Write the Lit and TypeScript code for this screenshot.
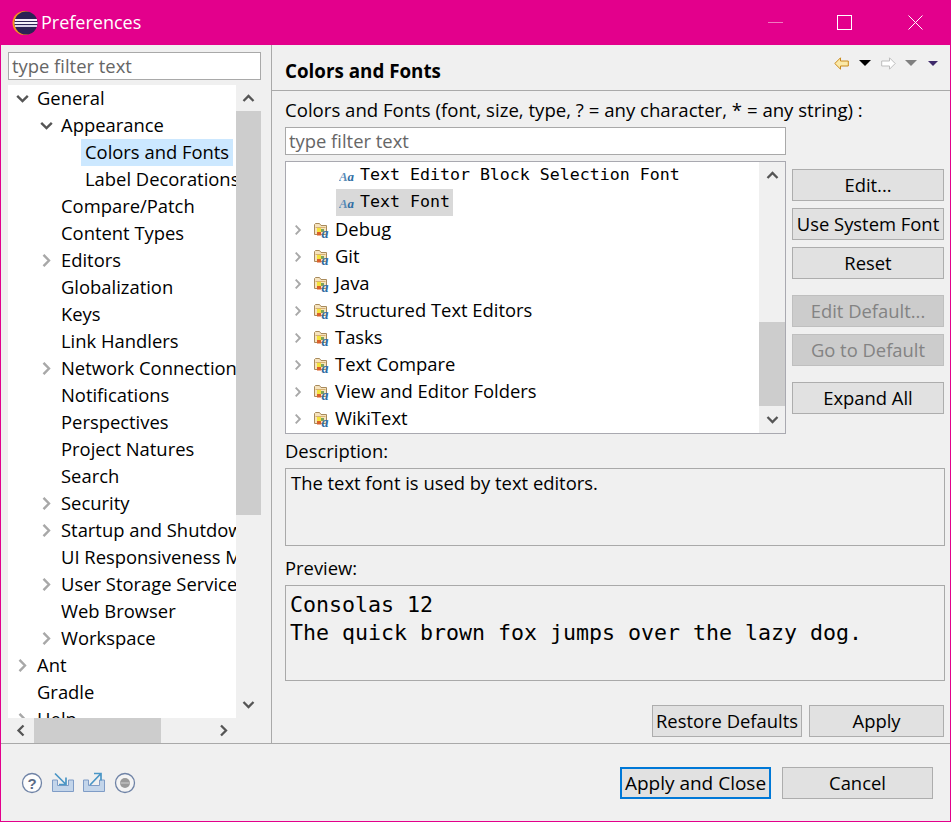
import { LitElement, html, css, svg } from "lit";
import { customElement } from "lit/decorators.js";

const leftRows: [number, string, string, boolean?][] = [
  [0, "open", "General"],
  [1, "open", "Appearance"],
  [2, "", "Colors and Fonts", true],
  [2, "", "Label Decorations"],
  [1, "", "Compare/Patch"],
  [1, "", "Content Types"],
  [1, "closed", "Editors"],
  [1, "", "Globalization"],
  [1, "", "Keys"],
  [1, "", "Link Handlers"],
  [1, "closed", "Network Connections"],
  [1, "", "Notifications"],
  [1, "", "Perspectives"],
  [1, "", "Project Natures"],
  [1, "", "Search"],
  [1, "closed", "Security"],
  [1, "closed", "Startup and Shutdown"],
  [1, "", "UI Responsiveness Monitoring"],
  [1, "closed", "User Storage Service"],
  [1, "", "Web Browser"],
  [1, "closed", "Workspace"],
  [0, "closed", "Ant"],
  [0, "", "Gradle"],
  [0, "closed", "Help"],
];

const cats = ["Debug", "Git", "Java", "Structured Text Editors", "Tasks", "Text Compare", "View and Editor Folders", "WikiText"];

const chevOpen = svg`<path d="M1.2 3.8 L6.5 9 L11.8 3.8" fill="none" stroke="#555" stroke-width="2.4"/>`;
const chevClosed = svg`<path d="M3.5 0.8 L9 6.5 L3.5 12.2" fill="none" stroke="#a8a8a8" stroke-width="2.4"/>`;

const twistie = (k: string) =>
  k === "open"
    ? html`<svg class="tw" viewBox="0 0 13 13">${chevOpen}</svg>`
    : k === "closed"
    ? html`<svg class="tw" viewBox="0 0 13 13">${chevClosed}</svg>`
    : html`<span class="tw"></span>`;

const sbArrow = (d: string) => {
  const p: Record<string, string> = {
    up: "M1.5 9 L6.5 4 L11.5 9",
    down: "M1.5 3 L6.5 8 L11.5 3",
    left: "M8.5 1.5 L3.5 6.5 L8.5 11.5",
    right: "M4 1.5 L9 6.5 L4 11.5",
  };
  return html`<svg class="sa" viewBox="0 0 13 13"><path d=${p[d]} fill="none" stroke="#555" stroke-width="2.3"/></svg>`;
};

const fontIcon = html`<svg class="aa" viewBox="0 0 16 13">
  <text x="0" y="12" font-family="Liberation Serif" font-style="italic" font-weight="700" font-size="13" fill="#5b8db8">A</text>
  <text x="8.5" y="12" font-family="Liberation Serif" font-style="italic" font-weight="700" font-size="13" fill="#2f6da3">a</text>
</svg>`;

const folderIcon = html`<svg class="fold" viewBox="0 0 16 16">
  <path d="M0.5 12.5 V2.5 L1.5 1.5 H5.5 L7 3.5 H12.5 V12.5 Z" fill="#f6e3bd" stroke="#a88a5c"/>
  <path d="M1.5 5.5 H11.5" stroke="#d6b070"/>
  <rect x="3" y="6" width="4" height="4" fill="#f4e23a"/>
  <rect x="3" y="10" width="4" height="3.5" fill="#d9602a"/>
  <rect x="7" y="7" width="3" height="3" fill="#7fa35a"/>
  <text x="7.5" y="15.5" font-family="Liberation Serif" font-style="italic" font-weight="700" font-size="14" fill="#2f6da3">a</text>
</svg>`;

@customElement("app-root")
export class AppRoot extends LitElement {
  static styles = css`
    :host {
      display: block;
      width: 951px;
      height: 822px;
      box-sizing: border-box;
      border: 1px solid #e3008c;
      border-top: 0;
      background: #f0f0f0;
      font-family: "Open Sans", "Noto Sans", sans-serif;
      font-size: 18.4px;
      color: #000;
      overflow: hidden;
    }
    .titlebar {
      height: 45px;
      background: #e3008c;
      display: flex;
      align-items: center;
      color: #fff;
      padding-left: 11px;
      font-size: 18px;
    }
    .titlebar .logo { width: 26px; height: 26px; margin-right: 3px; }
    .titlebar .t { flex: 1; margin-top: -2px; }
    .wbtn { width: 70px; height: 45px; display: flex; align-items: center; justify-content: center; }
    .wbtn svg { width: 15px; height: 15px; }
    .wsq svg { margin-right: 2px; }
    .main { display: flex; height: 698px; border-bottom: 1px solid #a9a9a9; box-sizing: content-box; }
    .left { border-right: 1px solid #a9a9a9; padding: 7px 9px 0 7px; box-sizing: border-box; flex: none; width: 271px; }
    input.filter {
      display: block;
      box-sizing: border-box;
      width: 253px;
      height: 28px;
      border: 1px solid #a9a9a9;
      background: #fff;
      padding: 0 3px 2px;
      font: inherit;
      color: #000;
      outline: none;
    }
    input.filter::placeholder { color: #666; opacity: 1; }
    input.filter.fil2 { width: 501px; margin-top: 3px; }
    .ltree { display: grid; grid-template-columns: 228px 25px; grid-template-rows: 633px 25px; margin-top: 5px; width: 253px; }
    .lrows { background: #fff; overflow: hidden; }
    .row { height: 27px; display: flex; align-items: center; white-space: nowrap; }
    .lrow .lbl { padding: 0 4px 2px; line-height: 25px; }
    .lrow .sel { background: #cce8ff; }
    .tw { width: 13px; height: 13px; flex: none; margin-left: 8px; margin-right: 4px; }
    .ind0 { padding-left: 0; }
    .ind1 { padding-left: 24px; }
    .ind2 { padding-left: 48px; }
    .vbar { background: #f0f0f0; display: flex; flex-direction: column; align-items: center; width: 25px; }
    .sa { width: 13px; height: 13px; flex: none; }
    .arrowbox { height: 26px; display: flex; align-items: center; justify-content: center; flex: none; width: 100%; }
    .track { flex: 1; width: 100%; display: flex; flex-direction: column; }
    .thumb { background: #cdcdcd; flex: none; width: 100%; }
    .thumb.lt { height: 404px; }
    .thumb.rt { height: 84px; margin-top: 134px; }
    .hbar { grid-column: 1 / 3; display: flex; background: #f0f0f0; height: 25px; padding-right: 25px; }
    .harrow { width: 26px; display: flex; align-items: center; justify-content: center; flex: none; }
    .hthumb { background: #cdcdcd; width: 127px; height: 25px; }
    .spacer { flex: 1; }

    .right { flex: 1; min-width: 0; display: flex; flex-direction: column; }
    .head { height: 46px; border-bottom: 1px solid #a9a9a9; box-sizing: border-box; padding: 0 12px 0 13px; display: flex; align-items: flex-start; }
    .head b { font-weight: 700; font-size: 18.8px; line-height: 26px; margin-top: 13px; }
    .navs { display: flex; align-items: flex-start; margin-left: auto; margin-top: 12px; }
    .navs svg { display: block; }
    .g9 { margin-left: 9px; }
    .g10 { margin-left: 10px; }
    .g11 { margin-left: 11px; }
    .body { padding: 6px 6px 0 13px; flex: 1; display: flex; flex-direction: column; }
    .lab { height: 27px; line-height: 26px; white-space: nowrap; }
    .lab1 { font-size: 18.6px; }
    .cols { display: flex; margin-top: 6px; }
    .rtree { width: 501px; height: 273px; box-sizing: border-box; border: 1px solid #a9a9b0; background: #fff; display: flex; overflow: hidden; }
    .rrows { flex: 1; min-width: 0; }
    .mono { font-family: "DejaVu Sans Mono", monospace; font-size: 16.6px; padding: 0 3px 2px 2px; line-height: 25px; }
    .selrow { background: #d9d9d9; }
    .it { margin-left: 50px; display: flex; align-items: center; height: 27px; padding-left: 3px; }
    .aa { width: 16px; height: 13px; flex: none; margin-right: 3px; }
    .rrow .tw { width: 10px; height: 10px; margin-left: 7px; margin-right: 11px; }
    .rrow .lab-t { margin-top: -3px; }
    .fold { width: 16px; height: 16px; flex: none; margin-right: 5px; }
    .rbar { width: 26px; flex: none; background: #f0f0f0; display: flex; flex-direction: column; align-items: center; }
    .btns { width: 152px; margin-left: 6px; display: flex; flex-direction: column; padding-top: 8px; }
    .btn {
      box-sizing: border-box;
      height: 32px;
      border: 1px solid #adadad;
      background: #e1e1e1;
      display: flex;
      align-items: center;
      justify-content: center;
      white-space: nowrap;
      font-size: 18.4px;
      padding: 0 0 2px;
      color: #000;
      font-family: inherit;
    }
    .btn.dis { background: #cccccc; color: #838383; border-color: #bfbfbf; }
    .mt7 { margin-top: 7px; }
    .mt16 { margin-top: 16px; }
    .box { width: 660px; box-sizing: border-box; border: 1px solid #a9a9a9; background: #f0f0f0; flex: none; }
    .desc { height: 78px; padding: 0 5px; line-height: 27px; }
    .prev { height: 96px; padding: 5px 4px; font-family: "DejaVu Sans Mono", monospace; font-size: 21.6px; line-height: 28px; white-space: pre; }
    .lab2 { margin-top: 2px; height: 32px; line-height: 29px; }
    .lab3 { margin-top: 6px; height: 33px; line-height: 31px; }
    .actions { display: flex; justify-content: flex-end; gap: 7px; margin-top: 24px; }
    .w150 { width: 150px; }
    .w135 { width: 135px; }
    .foot { height: 77px; display: flex; align-items: center; padding: 0 17px 0 20px; }
    .ficons { display: flex; gap: 9px; align-items: center; }
    .ficons svg { display: block; }
    .fb { display: flex; gap: 11px; margin-left: auto; }
    .fb .btn { width: 151px; padding: 0; }
    .fb .def { border: 2px solid #0078d7; font-size: 19px; }
  `;

  render() {
    return html`
      <div class="titlebar">
        <svg class="logo" viewBox="0 0 26 26">
          <circle cx="12.5" cy="13" r="12" fill="#f7941e"/>
          <circle cx="14" cy="13" r="11.5" fill="#2c2255"/>
          <rect x="3" y="9" width="22" height="2" fill="#f4f0fa"/>
          <rect x="2.5" y="12" width="23" height="2" fill="#f4f0fa"/>
          <rect x="3" y="15" width="22" height="2" fill="#d9d2ea"/>
        </svg>
        <span class="t">Preferences</span>
        <div class="wbtn"><svg viewBox="0 0 15 15"><path d="M0 7.5 H15" stroke="#f07ac0" fill="none"/></svg></div>
        <div class="wbtn wsq"><svg viewBox="0 0 15 15"><rect x="0.5" y="0.5" width="14" height="14" fill="none" stroke="#fff"/></svg></div>
        <div class="wbtn"><svg viewBox="0 0 15 15"><path d="M0.5 0.5 L14.5 14.5 M14.5 0.5 L0.5 14.5" stroke="#fff" fill="none"/></svg></div>
      </div>
      <div class="main">
        <div class="left">
          <input class="filter" placeholder="type filter text" />
          <div class="ltree">
            <div class="lrows">
              ${leftRows.map(
                ([ind, tw, label, sel]) => html`<div class="row lrow ind${ind}">
                  ${twistie(tw)}<span class="lbl ${sel ? "sel" : ""}">${label}</span>
                </div>`
              )}
            </div>
            <div class="vbar">
              <div class="arrowbox">${sbArrow("up")}</div>
              <div class="track"><div class="thumb lt"></div></div>
              <div class="arrowbox">${sbArrow("down")}</div>
            </div>
            <div class="hbar">
              <div class="harrow">${sbArrow("left")}</div>
              <div class="hthumb"></div>
              <div class="spacer"></div>
              <div class="harrow">${sbArrow("right")}</div>
            </div>
          </div>
        </div>
        <div class="right">
          <div class="head">
            <b>Colors and Fonts</b>
            <div class="navs">
              <svg width="15" height="13" viewBox="0 0 15 13"><path d="M0.8 6.5 L6.5 0.8 V4 H14.3 V9 H6.5 V12.2 Z" fill="#fbe9a8" stroke="#c98a1c"/></svg>
              <svg class="g10" width="12" height="13" viewBox="0 0 12 13"><path d="M0 3 H12 L6 9 Z" fill="#000"/></svg>
              <svg class="g10" width="15" height="13" viewBox="0 0 15 13"><path d="M14.2 6.5 L8.5 0.8 V4 H0.7 V9 H8.5 V12.2 Z" fill="#fff" stroke="#bdbdbd"/></svg>
              <svg class="g9" width="12" height="13" viewBox="0 0 12 13"><path d="M0 3 H12 L6 9 Z" fill="#808080"/></svg>
              <svg class="g11" width="10" height="13" viewBox="0 0 10 13"><path d="M0 4 H10 L5 9 Z" fill="#3f2a6b"/></svg>
            </div>
          </div>
          <div class="body">
            <div class="lab lab1">Colors and Fonts (font, size, type, ? = any character, * = any string) :</div>
            <input class="filter fil2" placeholder="type filter text" />
            <div class="cols">
              <div class="rtree">
                <div class="rrows">
                  <div class="row"><div class="it">${fontIcon}<span class="mono">Text Editor Block Selection Font</span></div></div>
                  <div class="row"><div class="it selrow">${fontIcon}<span class="mono">Text Font</span></div></div>
                  ${cats.map(
                    (c) => html`<div class="row rrow">${twistie("closed")}${folderIcon}<span class="lab-t">${c}</span></div>`
                  )}
                </div>
                <div class="rbar">
                  <div class="arrowbox">${sbArrow("up")}</div>
                  <div class="track"><div class="thumb rt"></div></div>
                  <div class="arrowbox">${sbArrow("down")}</div>
                </div>
              </div>
              <div class="btns">
                <button class="btn">Edit...</button>
                <button class="btn mt7">Use System Font</button>
                <button class="btn mt7">Reset</button>
                <button class="btn dis mt16">Edit Default...</button>
                <button class="btn dis mt7">Go to Default</button>
                <button class="btn mt16">Expand All</button>
              </div>
            </div>
            <div class="lab lab2">Description:</div>
            <div class="box desc">The text font is used by text editors.</div>
            <div class="lab lab3">Preview:</div>
            <div class="box prev">Consolas 12
The quick brown fox jumps over the lazy dog.</div>
            <div class="actions">
              <button class="btn w150">Restore Defaults</button>
              <button class="btn w135">Apply</button>
            </div>
          </div>
        </div>
      </div>
      <div class="foot">
        <div class="ficons">
          <svg width="22" height="22" viewBox="0 0 22 22"><circle cx="11" cy="11" r="9.5" fill="#fdfdfd" stroke="#6f83a6" stroke-width="1.3"/><text x="11" y="16.5" text-anchor="middle" font-family="Liberation Sans" font-weight="700" font-size="15" fill="#5a6a86">?</text></svg>
          <svg width="22" height="22" viewBox="0 0 22 22"><path d="M0.5 8 H5.5 V13.5 H16.5 V8 H21.5 V19.5 H0.5 Z" fill="#c3d5ea" stroke="#7f9cc6"/><path d="M3 1.5 L13.5 12 M14 5.5 V12.5 H7" fill="none" stroke="#4a96c6" stroke-width="1.7"/></svg>
          <svg width="22" height="22" viewBox="0 0 22 22"><path d="M0.5 8 H5.5 V13.5 H16.5 V8 H21.5 V19.5 H0.5 Z" fill="#c3d5ea" stroke="#7f9cc6"/><path d="M7 13 L17.5 2 M11 1.5 H18 V8.5" fill="none" stroke="#4a96c6" stroke-width="1.7"/></svg>
          <svg width="22" height="22" viewBox="0 0 22 22"><circle cx="11" cy="11" r="9.5" fill="#f4f4f4" stroke="#6f83a6" stroke-width="1.3"/><circle cx="11" cy="11" r="5" fill="#9a9a9a"/><rect x="6.5" y="10" width="9" height="2" fill="#b5b5b5"/></svg>
        </div>
        <div class="fb">
          <button class="btn def">Apply and Close</button>
          <button class="btn">Cancel</button>
        </div>
      </div>
    `;
  }
}
